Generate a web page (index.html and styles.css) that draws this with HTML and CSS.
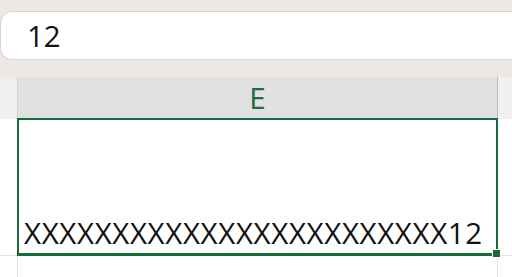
FILE: index.html
```html
<!DOCTYPE html>
<html lang="en">
<head>
  <meta charset="UTF-8" />
  <title>Sheet</title>
  <link rel="stylesheet" href="styles.css">
</head>
<body>
  <div class="formula-area">
    <div class="formula-box">12</div>
  </div>

  <div class="sheet">
    <div class="corner"></div>
    <div class="col-head">E</div>
    <div class="col-rest"></div>

    <div class="row-head"></div>
    <div class="cell selected">
      <span class="cell-text">XXXXXXXXXXXXXXXXXXXXXXXX12</span>
      <div class="fill-handle"></div>
    </div>
    <div class="row-rest"></div>

    <div class="row-head next"></div>
    <div class="cell next"></div>
    <div class="row-rest next"></div>
  </div>
</body>
</html>
```

FILE: styles.css
```css
html, body {
  margin: 0;
  padding: 0;
  width: 512px;
  height: 277px;
  overflow: hidden;
  background: #ffffff;
  font-family: "Open Sans", "Noto Sans", sans-serif;
}
.formula-area {
  height: 77px;
  box-sizing: border-box;
  padding-top: 11px;
  background-color: #ede8e5;
}
.formula-box {
  height: 49px;
  box-sizing: border-box;
  background: #ffffff;
  border: 1px solid #d9d4d1;
  border-right: none;
  border-radius: 12px 0 0 12px;
  padding-left: 26px;
  font-size: 29.5px;
  line-height: 47px;
  color: #111111;
}
.sheet {
  display: grid;
  grid-template-columns: 18px 480px 1fr;
  grid-template-rows: 42px 137px 1fr;
  height: 200px;
}
.corner {
  background-color: #efefef;
  border-right: 1px solid #d2d2d2;
}
.col-head {
  background-color: #e1e1e1;
  border-right: 1px solid #b8b8b8;
  border-bottom: 1px solid #1e7145;
  box-sizing: border-box;
  color: #22693c;
  font-size: 29.5px;
  text-align: center;
  line-height: 42px;
}
.col-rest {
  background-color: #f0f0f0;
}
.row-head, .row-rest {
  border-bottom: 1px solid #e1e1e1;
  box-sizing: border-box;
}
.row-head {
  border-right: 1px solid #e1e1e1;
}
.cell {
  position: relative;
  box-sizing: border-box;
  border-right: 1px solid #e1e1e1;
}
.cell.selected {
  margin-left: -1px;
  margin-top: -1px;
  border: 2px solid #176b3a;
  border-bottom-width: 3px;
  display: flex;
  align-items: flex-end;
  padding: 0 0 3px 5px;
  z-index: 1;
}
.row-head.next, .row-rest.next {
  border-bottom: none;
}
.cell-text {
  font-size: 29.5px;
  line-height: 34px;
  letter-spacing: 0.62px;
  color: #111111;
  white-space: nowrap;
}
.fill-handle {
  position: absolute;
  right: -5px;
  bottom: -5px;
  width: 7px;
  height: 7px;
  background: #176b3a;
  border: 1px solid #ffffff;
}
```
